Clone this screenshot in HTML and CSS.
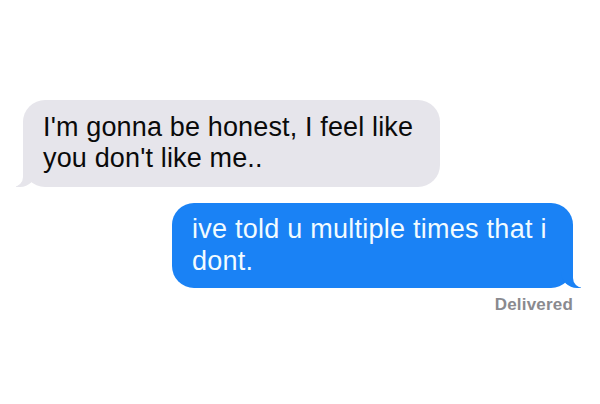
FILE: index.html
```html
<!DOCTYPE html>
<html>
<head>
<meta charset="utf-8">
<link rel="stylesheet" href="styles.css">
</head>
<body>
<div class="thread">
  <div class="bubble received">I'm gonna be honest, I feel like you don't like me..</div>
  <div class="bubble sent">ive told u multiple times that i dont.</div>
  <div class="status">Delivered</div>
</div>
</body>
</html>
```
FILE: styles.css
```css
html, body {
  margin: 0;
  padding: 0;
  background: #ffffff;
}
.thread {
  width: 600px;
  height: 404px;
  box-sizing: border-box;
  padding: 100px 27px 0 23px;
  display: flex;
  flex-direction: column;
  font-family: "Liberation Sans", Arial, sans-serif;
}
.bubble {
  position: relative;
  box-sizing: border-box;
  font-size: 27px;
  letter-spacing: 0.15px;
  line-height: 31px;
  padding: 12px 18px 13px 20px;
  border-radius: 22px;
}
.received {
  align-self: flex-start;
  width: 417px;
  background: #e6e5eb;
  color: #0a0a0a;
}
.received::before {
  content: "";
  position: absolute;
  bottom: 0;
  left: -7px;
  width: 20px;
  height: 22px;
  background: #e6e5eb;
  border-bottom-right-radius: 16px;
}
.received::after {
  content: "";
  position: absolute;
  bottom: 0;
  left: -13px;
  width: 13px;
  height: 22px;
  background: #ffffff;
  border-bottom-right-radius: 10px;
}
.sent {
  align-self: flex-end;
  margin-top: 16px;
  width: 401px;
  background: #1a82f5;
  color: #f2fbff;
  padding: 10px 16px 11px 20px;
  letter-spacing: 0.25px;
  line-height: 32px;
}
.sent::before {
  content: "";
  position: absolute;
  bottom: 0;
  right: -8px;
  width: 20px;
  height: 22px;
  background: #1a82f5;
  border-bottom-left-radius: 16px;
}
.sent::after {
  content: "";
  position: absolute;
  bottom: 0;
  right: -14px;
  width: 14px;
  height: 22px;
  background: #ffffff;
  border-bottom-left-radius: 10px;
}
.status {
  align-self: flex-end;
  margin-top: 7px;
  font-size: 17px;
  font-weight: bold;
  letter-spacing: 0.2px;
  color: #8a8a8f;
}
```
